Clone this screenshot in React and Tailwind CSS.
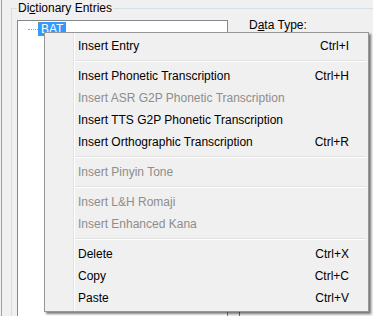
const ITEMS = [
  { label: 'Insert Entry', key: 'Ctrl+I' },
  { sep: true },
  { label: 'Insert Phonetic Transcription', key: 'Ctrl+H' },
  { label: 'Insert ASR G2P Phonetic Transcription', disabled: true },
  { label: 'Insert TTS G2P Phonetic Transcription' },
  { label: 'Insert Orthographic Transcription', key: 'Ctrl+R' },
  { sep: true },
  { label: 'Insert Pinyin Tone', disabled: true },
  { sep: true },
  { label: 'Insert L&H Romaji', disabled: true },
  { label: 'Insert Enhanced Kana', disabled: true },
  { sep: true },
  { label: 'Delete', key: 'Ctrl+X' },
  { label: 'Copy', key: 'Ctrl+C' },
  { label: 'Paste', key: 'Ctrl+V' },
];

function ContextMenu() {
  return (
    <div className="absolute left-[44px] top-[32px] w-[325px] border border-[#979797] bg-[#f0f0f0] py-[2px] shadow-[2px_2px_2px_rgba(0,0,0,0.5)]">
      <div className="absolute left-[28px] top-0 bottom-0 w-[2px] border-l border-[#e2e3e3] border-r-white border-r" />
      {ITEMS.map((it, i) =>
        it.sep ? (
          <div key={i} className="flex h-[8px] items-center pl-[30px] pr-[2px]">
            <div className="h-[2px] w-full border-t border-[#e0e0e0] border-b border-b-white" />
          </div>
        ) : (
          <div
            key={i}
            className={`flex h-[22px] items-center pl-[33px] pr-[19px] ${
              it.disabled ? 'text-[#8d8d8d]' : 'text-black'
            }`}
          >
            <span className="flex-1">{it.label}</span>
            {it.key && <span>{it.key}</span>}
          </div>
        )
      )}
    </div>
  );
}

export default function App() {
  return (
    <div
      className="relative h-[316px] w-[373px] overflow-hidden bg-[#f0f0f0] text-[12px] leading-none"
      style={{ fontFamily: '"Liberation Sans", Arial, sans-serif' }}
    >
      <div className="flex h-full">
        <div className="ml-[1px] w-[1px] bg-[#a0a0a0]" />
        <div className="ml-[9px] mt-[8px] flex-1 border-l border-t border-[#d5dfe5]">
          <div className="-mt-[7px] ml-[5px] w-fit bg-[#f0f0f0] px-[1px] text-black">
            Di<span className="underline">c</span>tionary Entries
          </div>
          <div className="mt-[6px] flex h-[300px]">
            <div className="ml-[5px] h-full w-[211px] border border-[#828790] bg-white pl-[10px] pt-[1px]">
              <div className="flex items-center">
                <div className="w-[10px] border-t border-dotted border-[#a0a0a0]" />
                <div className="flex h-[14px] items-center border border-dotted border-[#c08020] bg-[#3399ff] px-[2px] text-white">
                  BAT
                </div>
              </div>
            </div>
            <div className="ml-[11px] flex flex-1 flex-col">
              <div className="ml-[10px] mt-[-1px]">
                D<span className="underline">a</span>ta Type:
              </div>
              <div className="mt-auto h-[24px] border-l border-[#6d6d6d]" />
            </div>
          </div>
        </div>
      </div>
      <ContextMenu />
    </div>
  );
}
